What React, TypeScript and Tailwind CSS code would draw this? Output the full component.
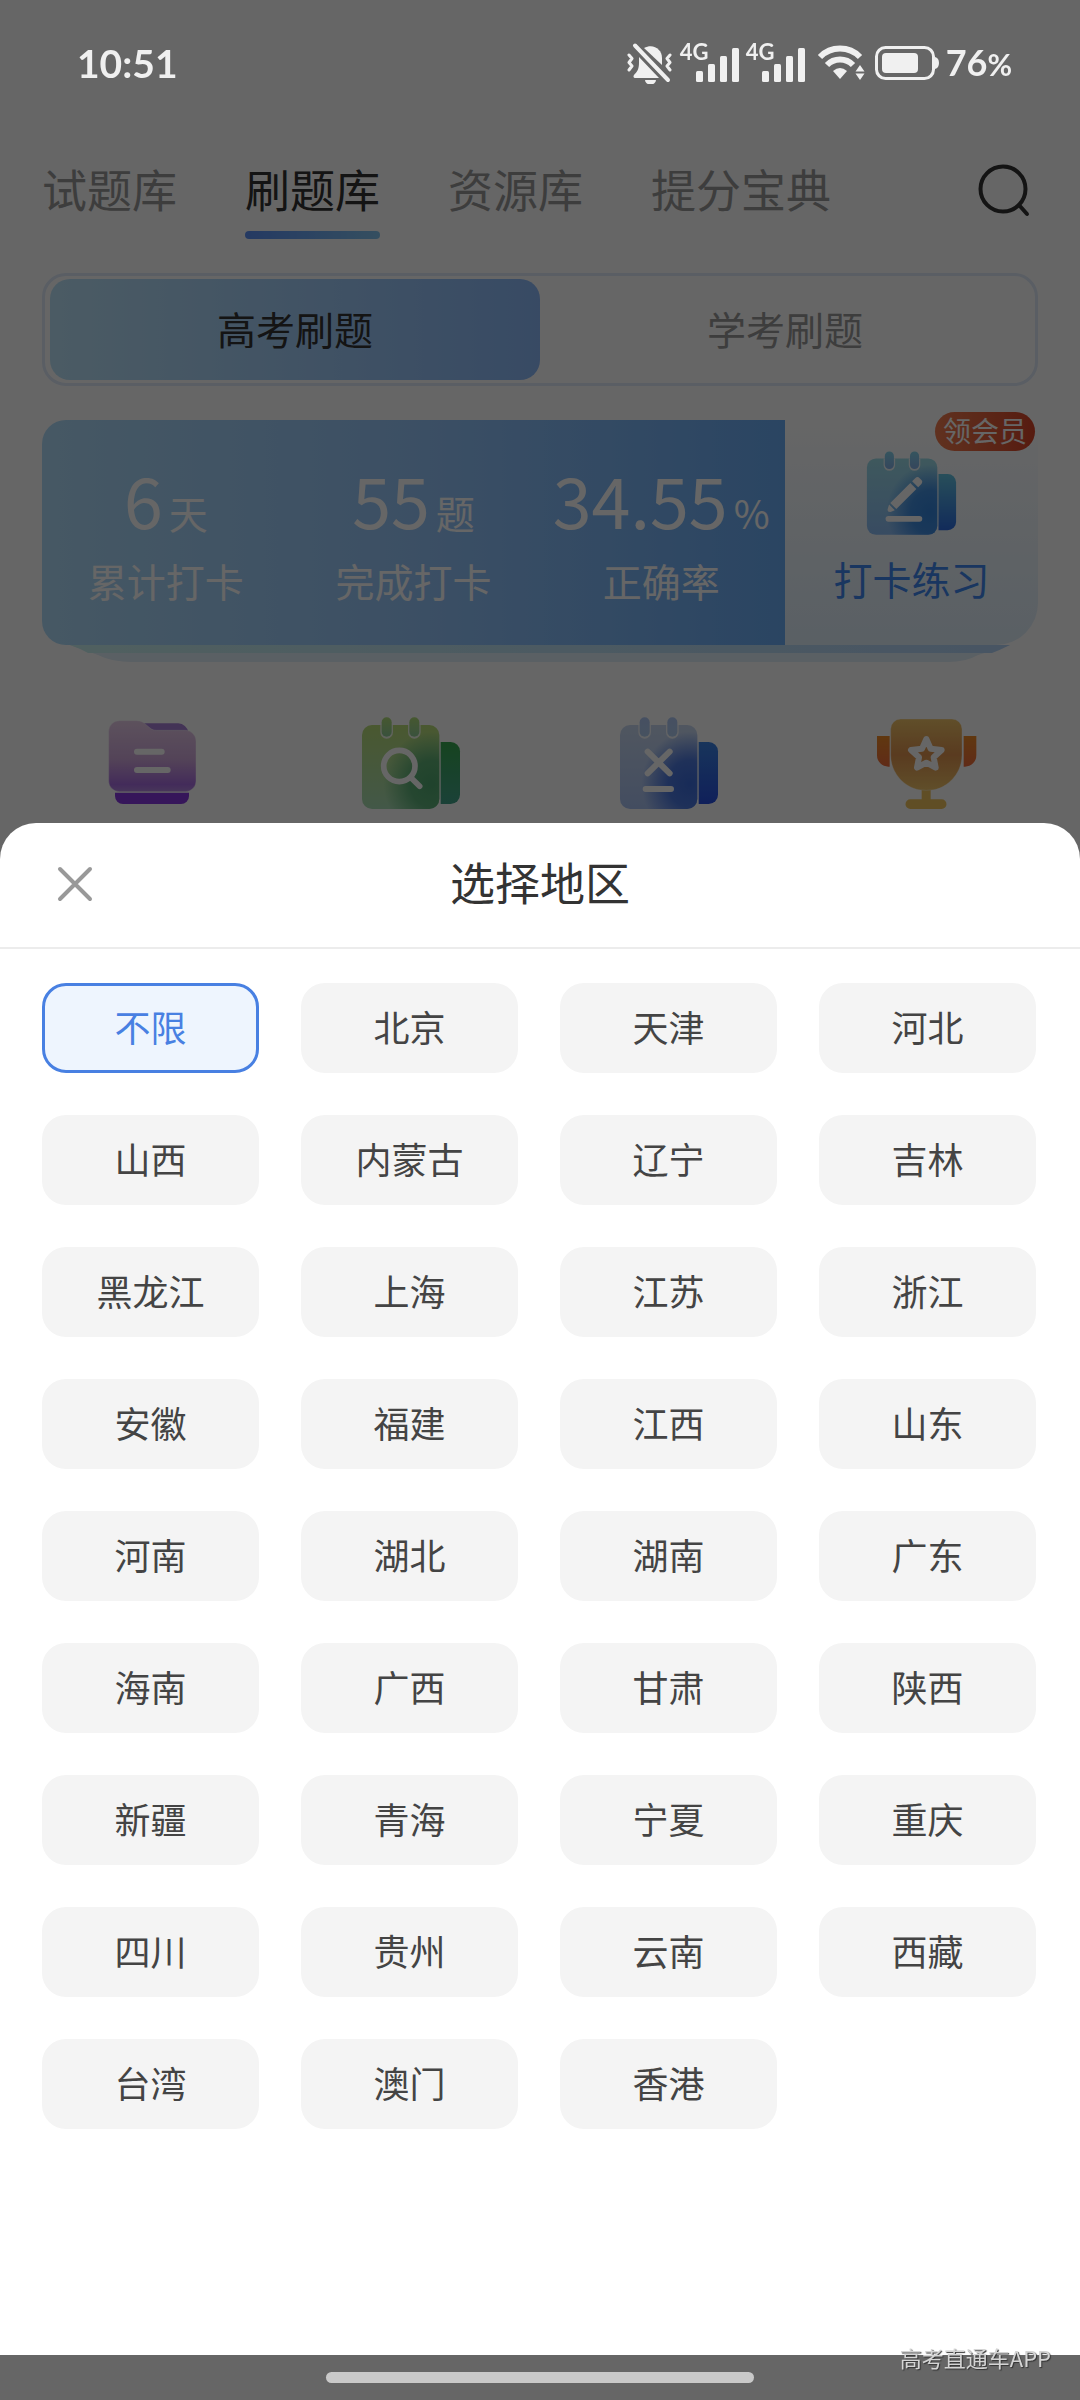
import React, { useState } from 'react';

const regions = [
  '不限', '北京', '天津', '河北',
  '山西', '内蒙古', '辽宁', '吉林',
  '黑龙江', '上海', '江苏', '浙江',
  '安徽', '福建', '江西', '山东',
  '河南', '湖北', '湖南', '广东',
  '海南', '广西', '甘肃', '陕西',
  '新疆', '青海', '宁夏', '重庆',
  '四川', '贵州', '云南', '西藏',
  '台湾', '澳门', '香港'
];

const tabs = ['试题库', '刷题库', '资源库', '提分宝典'];

const modes = ['高考刷题', '学考刷题'];

const stats = [
  { value: '6', unit: '天', label: '累计打卡' },
  { value: '55', unit: '题', label: '完成打卡' },
  { value: '34.55', unit: '%', label: '正确率' }
];

interface CalendarIconProps {
  id: string;
  top: string;
  bottom: string;
  glow: string;
  pegTop: string;
  pegBottom: string;
  sideTop: string;
  sideBottom: string;
  className: string;
  children: React.ReactNode;
}

const CalendarIcon: React.FC<CalendarIconProps> = ({
  id,
  top,
  bottom,
  glow,
  pegTop,
  pegBottom,
  sideTop,
  sideBottom,
  className,
  children
}) => (
  <svg viewBox="0 0 300 282" className={className} fill="none" aria-hidden="true">
    <defs>
      <linearGradient id={`${id}-body`} x1="0" y1="0" x2="0" y2="1">
        <stop offset="0" stopColor={top} />
        <stop offset="1" stopColor={bottom} />
      </linearGradient>
      <radialGradient id={`${id}-glow`} cx="0.9" cy="0.7" r="0.62">
        <stop offset="0" stopColor={glow} />
        <stop offset="0.45" stopColor={glow} stopOpacity="0.85" />
        <stop offset="1" stopColor={glow} stopOpacity="0" />
      </radialGradient>
      <linearGradient id={`${id}-peg`} x1="0" y1="0" x2="0" y2="1">
        <stop offset="0" stopColor={pegTop} />
        <stop offset="1" stopColor={pegBottom} />
      </linearGradient>
      <linearGradient id={`${id}-side`} x1="0" y1="0" x2="0" y2="1">
        <stop offset="0" stopColor={sideTop} />
        <stop offset="1" stopColor={sideBottom} />
      </linearGradient>
    </defs>
    <path d="M239 78h30a28 28 0 0 1 28 28v130a28 28 0 0 1-28 28h-30z" fill={`url(#${id}-side)`} />
    <rect x="3" y="27" width="232" height="252" rx="30" fill={`url(#${id}-body)`} />
    <rect x="3" y="27" width="232" height="252" rx="30" fill={`url(#${id}-glow)`} />
    <path d="M58 27v22a19 19 0 0 0 38 0V27zM141 27v22a19 19 0 0 0 38 0V27z" fill="#fff" fillOpacity="0.8" />
    <rect x="62" y="4" width="30" height="58" rx="15" fill={`url(#${id}-peg)`} />
    <rect x="145" y="4" width="30" height="58" rx="15" fill={`url(#${id}-peg)`} />
    {children}
  </svg>
);

const FolderIcon = () => (
  <svg viewBox="0 0 300 282" className="h-[94px] w-[100px]" fill="none" aria-hidden="true">
    <defs>
      <linearGradient id="folder" x1="0" y1="0" x2="0" y2="1">
        <stop offset="0" stopColor="#e8cce8" />
        <stop offset="0.55" stopColor="#d0a8dc" />
        <stop offset="0.9" stopColor="#a86ce0" />
        <stop offset="1" stopColor="#b488e0" />
      </linearGradient>
    </defs>
    <path d="M110 22h116a32 32 0 0 1 30 26H110z" fill="#a880d8" />
    <path d="M36 230h222v10a24 24 0 0 1-24 24H60a24 24 0 0 1-24-24z" fill="#8838e0" />
    <path
      d="M17 46a32 32 0 0 1 32-32h52c12 0 20 4 28 12l12 10c6 5 12 7 20 7h86a32 32 0 0 1 32 32v120a32 32 0 0 1-32 32H49a32 32 0 0 1-32-32z"
      fill="url(#folder)"
      stroke="#fff"
      strokeOpacity="0.4"
      strokeWidth="3"
    />
    <path d="M102 107h74M102 162h92" stroke="#fff" strokeWidth="18" strokeLinecap="round" />
  </svg>
);

const TrophyIcon = () => (
  <svg viewBox="0 0 300 282" className="h-[94px] w-[100px]" fill="none" aria-hidden="true">
    <defs>
      <linearGradient id="cup" x1="0" y1="0" x2="0" y2="1">
        <stop offset="0" stopColor="#f0c468" />
        <stop offset="0.5" stopColor="#e09450" />
        <stop offset="1" stopColor="#f0c468" />
      </linearGradient>
      <linearGradient id="handle" x1="0" y1="0" x2="0" y2="1">
        <stop offset="0" stopColor="#f08c28" />
        <stop offset="1" stopColor="#f06c3c" />
      </linearGradient>
    </defs>
    <path d="M0 60h38v92h-4a34 34 0 0 1-34-34zM298 60h-38v92h4a34 34 0 0 0 34-34z" fill="url(#handle)" />
    <path d="M134 216h27v34h33a13 13 0 0 1 0 29H100a13 13 0 0 1 0-29h34z" fill="#f0c45c" />
    <path
      d="M71 9h154a30 30 0 0 1 30 30v78c0 58-46 98-84 104q-23 4-46 0c-38-6-84-46-84-104V39a30 30 0 0 1 30-30z"
      fill="url(#cup)"
      stroke="#fff"
      strokeOpacity="0.35"
      strokeWidth="3"
    />
    <path
      d="m148 69 13 29 33 4-24 22 6 31-28-15-28 15 6-31-24-22 33-4z"
      stroke="#fff"
      strokeWidth="18"
      strokeLinejoin="round"
    />
  </svg>
);

const SignalIcon = () => (
  <div className="relative h-[40px] w-[60px]">
    <span className="absolute left-0 top-0 text-[22px] font-bold leading-[18px]">4G</span>
    <svg viewBox="0 0 60 40" className="h-full w-full" fill="currentColor" aria-hidden="true">
      <rect x="16" y="28" width="7" height="11" rx="1.5" />
      <rect x="28" y="21" width="7" height="18" rx="1.5" />
      <rect x="40" y="13" width="7" height="26" rx="1.5" />
      <rect x="52" y="5" width="7" height="34" rx="1.5" />
    </svg>
  </div>
);

const StatusBar = () => (
  <div className="fixed inset-x-0 top-0 z-20 flex h-[126px] items-center justify-between pl-[77px] pr-[68px] font-['Lato','Noto_Sans_CJK_SC',sans-serif] text-[#f0f0f0]">
    <span className="text-[39px] font-bold leading-[48px]">10:51</span>
    <div className="flex items-center">
      <svg viewBox="0 0 46 42" className="mr-[7px] h-[42px] w-[46px]" fill="currentColor" aria-hidden="true">
        <path d="M12 15v6c0 6-2 9-5 12-1 1-.5 3 1 3h24z" />
        <path d="M17 6c9-5 18 1 18 10v7z" />
        <path d="M18 38h11a5.500 4.500 0 0 1-11 0z" />
        <path d="m8 3.500 33 34.500" stroke="currentColor" strokeWidth="4" strokeLinecap="round" />
        <path
          d="m2 13 3 3.500-3 4 3 3.500-3 4M43 13l-3 3.500 3 4-3 3.500 3 4"
          fill="none"
          stroke="currentColor"
          strokeWidth="3"
          strokeLinecap="round"
          strokeLinejoin="round"
        />
      </svg>
      <div className="mr-[11px] flex gap-[6px]">
        <SignalIcon />
        <SignalIcon />
      </div>
      <svg viewBox="0 0 48 36" className="mr-[10px] h-[36px] w-[48px]" fill="none" aria-hidden="true">
        <path d="M3 12a28 28 0 0 1 40 0" stroke="currentColor" strokeWidth="6" />
        <path d="M10 20a18 18 0 0 1 26 0" stroke="currentColor" strokeWidth="6" />
        <path d="M16 26q7-6 14 0l-7 8z" fill="currentColor" />
        <path d="m43 20 4.500 6.500h-9zM43 35l4.500-6.500h-9z" fill="currentColor" />
      </svg>
      <svg viewBox="0 0 64 36" className="mr-[7px] h-[36px] w-[64px]" fill="none" aria-hidden="true">
        <rect x="1.500" y="2.500" width="57" height="31" rx="9" stroke="currentColor" strokeWidth="3" />
        <rect x="7" y="8" width="36" height="20" rx="4" fill="currentColor" />
        <path d="M60 12q4 1 4 6t-4 6z" fill="currentColor" />
      </svg>
      <span className="text-[36px] font-bold leading-[48px]">
        76<span className="text-[30px]">%</span>
      </span>
    </div>
  </div>
);

const App: React.FC = () => {
  const [selected, setSelected] = useState('不限');
  const [open, setOpen] = useState(true);

  return (
    <div className="relative min-h-screen bg-white font-['Noto_Sans_CJK_SC',sans-serif]">
      <StatusBar />

      {/* Page behind the sheet */}
      <main className="px-[42px] pt-[164px]">
        <nav className="flex items-start gap-[68px] pr-[8px]">
          {tabs.map((tab) => (
            <button
              key={tab}
              className={`flex flex-col gap-[17px] text-[45px] leading-[50px] ${tab === '刷题库' ? 'text-[#333]' : 'text-[#999]'}`}
            >
              {tab}
              {tab === '刷题库' && (
                <span className="h-2 w-full rounded-full bg-linear-to-r from-[#5c90f6] to-[#84c4f0]" />
              )}
            </button>
          ))}
          <button aria-label="搜索" className="ml-auto text-[#333]">
            <svg viewBox="0 -5 54 54" className="h-[54px] w-[54px]" fill="none" stroke="currentColor" strokeWidth="4" strokeLinecap="round">
              <circle cx="27" cy="20" r="22.500" />
              <path d="m43 36 8 9" />
            </svg>
          </button>
        </nav>

        <div className="mt-[34px] flex rounded-3xl border-[3px] border-[#e0ebfb] px-[5px] py-[3px]">
          {modes.map((mode, i) => (
            <button
              key={mode}
              className={`h-[101px] flex-1 rounded-[20px] pb-1 text-[39px] leading-[50px] ${
                i === 0 ? 'bg-linear-to-r from-[#bce4fa] to-[#8cbafa] text-[#333]' : 'text-[#999]'
              }`}
            >
              {mode}
            </button>
          ))}
        </div>

        <section className="mt-[34px] flex h-[225px]">
          <div className="grid flex-1 grid-cols-3 rounded-l-3xl bg-linear-to-r from-[#afdcfa] via-[#96c6fa] to-[#6aacf6] text-white">
            {stats.map((stat) => (
              <div key={stat.label} className="flex flex-col items-center pt-[39px]">
                <div className="flex items-baseline gap-[6px]">
                  <span className="text-[70px] leading-[80px]">{stat.value}</span>
                  <span className="text-[39px] leading-[50px]">{stat.unit}</span>
                </div>
                <span className="mt-[16px] text-[39px] leading-[50px]">{stat.label}</span>
              </div>
            ))}
          </div>
          <button className="relative flex w-[253px] flex-col items-center rounded-br-[42px] bg-linear-to-b from-white to-[#e0effb] pt-[30px]">
            <CalendarIcon
              id="checkin"
              top="#9cdce8"
              bottom="#8cbcf4"
              glow="#3484dc"
              pegTop="#84d4ec"
              pegBottom="#84b0e8"
              sideTop="#64c4e0"
              sideBottom="#2c6ce0"
              className="h-[86px] w-[91px]"
            >
              <path d="m80 174 66-66 20 20-66 66zM152 102l10-10q8-7 15 0l5 5q7 7 0 15l-10 10zM76 179l19 19-12 5q-12 2-12-8z" fill="#fff" />
              <path d="M74 226h102" stroke="#fff" strokeWidth="19" strokeLinecap="round" />
            </CalendarIcon>
            <span className="mt-[17px] text-[39px] leading-[50px] text-[#4088f0]">打卡练习</span>
            <span className="absolute -top-2 right-[3px] h-[39px] rounded-full bg-linear-to-r from-[#f07c50] to-[#d84428] px-2 text-[28px] leading-[36px] text-white">
              领会员
            </span>
          </button>
        </section>
        <svg viewBox="0 0 996 17" preserveAspectRatio="none" className="block h-[17px] w-full" aria-hidden="true">
          <defs>
            <linearGradient id="strip" x1="0" x2="1">
              <stop offset="0" stopColor="#c8f0f0" />
              <stop offset="1" stopColor="#b4d4f8" />
            </linearGradient>
          </defs>
          <path d="M28 0q14 5 28 10q14 7 34 7h816q18 0 30-7l32-10z" fill="#e0effa" />
          <path d="M28 0q9 3 18 8h904q8-3 18-8z" fill="url(#strip)" />
        </svg>

        <div className="-mx-[18px] mt-[54px] grid grid-cols-4 justify-items-center">
          <FolderIcon />
          <CalendarIcon
            id="search"
            top="#b8dc78"
            bottom="#a8dcb4"
            glow="#50a870"
            pegTop="#b0dc78"
            pegBottom="#90cc98"
            sideTop="#38a850"
            sideBottom="#44a48c"
            className="h-[94px] w-[100px]"
          >
            <circle cx="115" cy="150" r="47" stroke="#fff" strokeWidth="17" />
            <path d="m150 185 26 26" stroke="#fff" strokeWidth="17" strokeLinecap="round" />
          </CalendarIcon>
          <CalendarIcon
            id="wrong"
            top="#c8d8f0"
            bottom="#a8c0f0"
            glow="#3c6cdc"
            pegTop="#b0c8f4"
            pegBottom="#b0ccf0"
            sideTop="#3c84e4"
            sideBottom="#2850e0"
            className="h-[94px] w-[100px]"
          >
            <path d="m86 107 66 65M152 107l-66 65M80 219h76" stroke="#fff" strokeWidth="18" strokeLinecap="round" />
          </CalendarIcon>
          <TrophyIcon />
        </div>
      </main>

      {/* Region picker */}
      {open && (
        <div className="fixed inset-0 z-10 flex flex-col bg-black/60 pt-[823px]">
          <div role="dialog" aria-labelledby="region-title" className="flex-1 rounded-t-[36px] bg-white">
            <header className="grid grid-cols-[1fr_auto_1fr] items-center border-b-2 border-[#ececec] px-[54px] pb-[38px] pt-[36px]">
              <button aria-label="关闭" onClick={() => setOpen(false)} className="justify-self-start">
                <svg viewBox="0 0 42 42" className="h-[42px] w-[42px]" fill="none" stroke="#999" strokeWidth="4" strokeLinecap="round">
                  <path d="m6 6 30 30M36 6 6 36" />
                </svg>
              </button>
              <h2 id="region-title" className="pb-1 text-[45px] leading-[46px] text-[#333]">选择地区</h2>
            </header>
            <div className="grid grid-cols-4 gap-[42px] pl-[42px] pr-[44px] pt-[34px]">
              {regions.map((region) => (
                <button
                  key={region}
                  aria-pressed={selected === region}
                  onClick={() => setSelected(region)}
                  className={`h-[90px] rounded-3xl pb-1 text-[36px] leading-[48px] ${
                    selected === region
                      ? 'border-[3px] border-[#4880e2] bg-[#eef5fe] text-[#4880e2]'
                      : 'bg-[#f4f4f4] text-[#444]'
                  }`}
                >
                  {region}
                </button>
              ))}
            </div>
          </div>
          <footer className="relative flex h-[45px] justify-center pt-[17px]">
            <div className="h-[11px] w-[428px] rounded-full bg-[#c9c9c9]" />
            <span className="absolute -top-[13px] right-[29px] text-[22px] leading-[30px] text-[#d4d4d4] [text-shadow:1px_1px_1px_#333]">
              高考直通车APP
            </span>
          </footer>
        </div>
      )}
    </div>
  );
};

export default App;
